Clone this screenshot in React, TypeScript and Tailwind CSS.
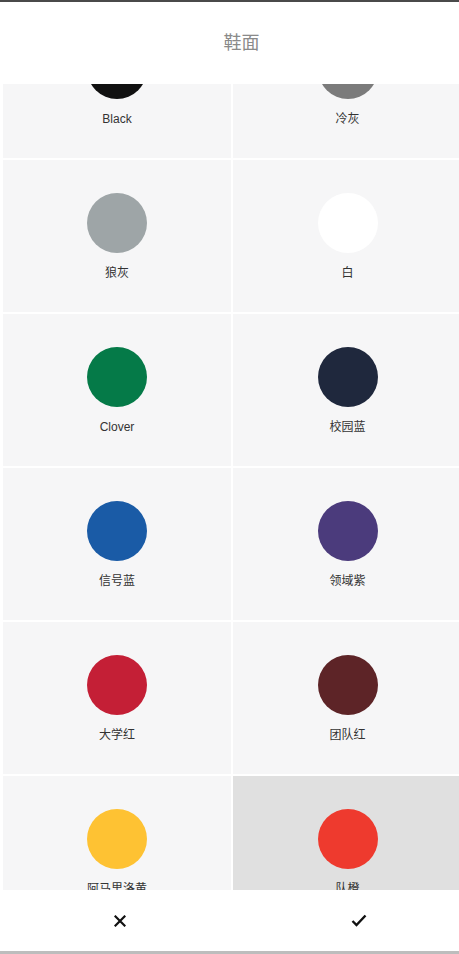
import React from "react";

const colors: { name: string; color: string; selected?: boolean }[] = [
  { name: "Black", color: "#111111" },
  { name: "冷灰", color: "#7b7b7b" },
  { name: "狼灰", color: "#9ea5a7" },
  { name: "白", color: "#ffffff" },
  { name: "Clover", color: "#057a48" },
  { name: "校园蓝", color: "#1f283d" },
  { name: "信号蓝", color: "#1a5ba6" },
  { name: "领域紫", color: "#4b3b7c" },
  { name: "大学红", color: "#c41f36" },
  { name: "团队红", color: "#5d2427" },
  { name: "阿马里洛黄", color: "#fec233" },
  { name: "队橙", color: "#ee3a2e", selected: true },
];

export default function App() {
  return (
    <div
      className="flex h-[954px] w-[459px] flex-col overflow-hidden bg-white"
      style={{ fontFamily: '"Liberation Sans", Arial, "Noto Sans CJK SC", sans-serif' }}
    >
      <div className="h-[2px] shrink-0 bg-[#4a4a4a]" />
      <div className="relative z-10 flex h-[82px] shrink-0 items-center justify-center bg-white pl-[24px]">
        <span className="text-[18px] text-[#8a8a8a]">鞋面</span>
      </div>
      <div className="min-h-0 flex-1 overflow-hidden bg-white">
        <div className="mt-[-78px] grid w-[462px] grid-cols-[228px_229px] gap-[2px] pl-[3px]">
          {colors.map((c) => (
            <div
              key={c.name}
              className={`flex h-[152px] flex-col items-center ${c.selected ? "bg-[#e0e0e0]" : "bg-[#f6f6f7]"}`}
            >
              <div
                className="mt-[33px] h-[60px] w-[60px] shrink-0 rounded-full"
                style={{ backgroundColor: c.color }}
              />
              <div className="mt-[12px] text-[12px] leading-[16px] text-[#333333]">{c.name}</div>
            </div>
          ))}
        </div>
      </div>
      <div className="relative z-10 flex h-[61px] shrink-0 items-center bg-white">
        <div className="flex w-1/2 items-center justify-center pl-[10px]">
          <svg width="12" height="12" viewBox="0 0 12 12">
            <path d="M1.5 1.5 L10.5 10.5 M10.5 1.5 L1.5 10.5" stroke="#111" strokeWidth="2.2" strokeLinecap="square" />
          </svg>
        </div>
        <div className="flex w-1/2 items-center justify-center pl-[30px]">
          <svg width="16" height="13" viewBox="0 0 16 13">
            <path d="M1.5 7 L5.5 11 L14.5 1.5" stroke="#111" strokeWidth="2.4" fill="none" />
          </svg>
        </div>
      </div>
      <div className="h-[3px] shrink-0 bg-[#bdbdbd]" />
    </div>
  );
}
